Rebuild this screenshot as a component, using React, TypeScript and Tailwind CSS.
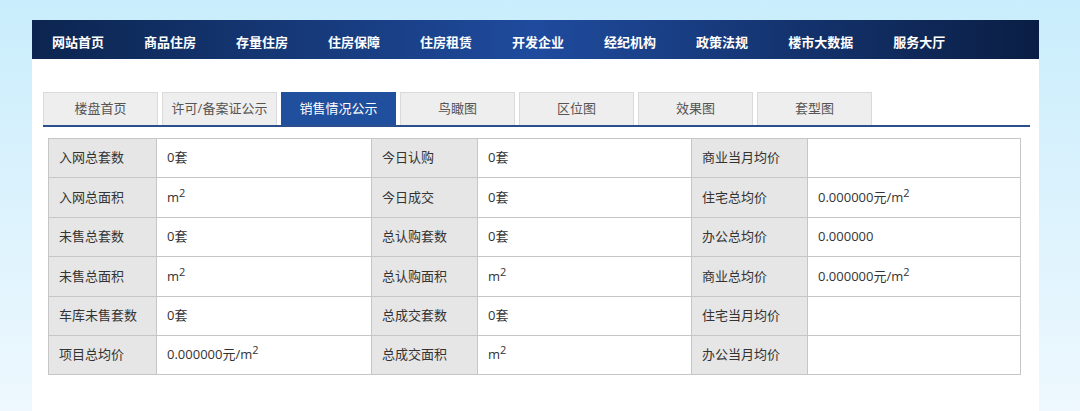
import React from "react";

const navItems = [
  "网站首页",
  "商品住房",
  "存量住房",
  "住房保障",
  "住房租赁",
  "开发企业",
  "经纪机构",
  "政策法规",
  "楼市大数据",
  "服务大厅",
];

const tabs = ["楼盘首页", "许可/备案证公示", "销售情况公示", "鸟瞰图", "区位图", "效果图", "套型图"];

function M2() {
  return (
    <span>
      m<sup className="text-[11px] relative -top-[5px]">2</sup>
    </span>
  );
}

function Price({ unit = true }: { unit?: boolean }) {
  return (
    <span>
      0.000000
      {unit && (
        <>
          元/
          <M2 />
        </>
      )}
    </span>
  );
}

type Cell = React.ReactNode;

const rows: [string, Cell, string, Cell, string, Cell][] = [
  ["入网总套数", "0套", "今日认购", "0套", "商业当月均价", ""],
  ["入网总面积", <M2 />, "今日成交", "0套", "住宅总均价", <Price />],
  ["未售总套数", "0套", "总认购套数", "0套", "办公总均价", <Price unit={false} />],
  ["未售总面积", <M2 />, "总认购面积", <M2 />, "商业总均价", <Price />],
  ["车库未售套数", "0套", "总成交套数", "0套", "住宅当月均价", ""],
  ["项目总均价", <Price />, "总成交面积", <M2 />, "办公当月均价", ""],
];

export default function App() {
  return (
    <div
      className="w-[1080px] h-[411px] overflow-hidden bg-gradient-to-b from-[#c9edfc] to-[#eef8fe] pt-[20px] pl-[32px]"
      style={{ fontFamily: '"Open Sans", "Noto Sans CJK SC", sans-serif' }}
    >
      <div className="w-[1007px] h-[400px] bg-white">
        {/* top nav */}
        <div className="h-[39px] flex items-center gap-[40px] pl-[20px] pt-[5px] bg-gradient-to-r from-[#0c2550] via-[#1f4b9e] to-[#0a1e44]">
          {navItems.map((n) => (
            <span key={n} className="text-white text-[13px] font-bold leading-none whitespace-nowrap">
              {n}
            </span>
          ))}
        </div>

        {/* tabs */}
        <div className="mt-[33px] ml-[11px] w-[987px] border-b-2 border-[#2b4f8c] flex gap-[4px]">
          {tabs.map((t) => {
            const active = t === "销售情况公示";
            return (
              <div
                key={t}
                className={
                  active
                    ? "w-[115px] h-[33px] flex items-center justify-center bg-[#1f4f9d] text-white text-[13px]"
                    : "w-[115px] h-[33px] flex items-center justify-center bg-[#eeeeee] border border-b-0 border-[#dadada] text-[#555555] text-[13px]"
                }
              >
                {t}
              </div>
            );
          })}
        </div>

        {/* data table */}
        <table className="mt-[11px] ml-[16px] w-[972px] border-collapse table-fixed text-[13px] text-[#333333]">
          <colgroup>
            <col className="w-[108px]" />
            <col className="w-[215px]" />
            <col className="w-[106px]" />
            <col className="w-[214px]" />
            <col className="w-[116px]" />
            <col className="w-[213px]" />
          </colgroup>
          <tbody>
            {rows.map((r, i) => (
              <tr key={i} className="h-[39.4px]">
                {r.map((c, j) => (
                  <td
                    key={j}
                    className={
                      j % 2 === 0
                        ? "border border-[#c6c6c6] bg-[#e6e6e6] pl-[10px] whitespace-nowrap"
                        : "border border-[#c6c6c6] bg-white pl-[10px] whitespace-nowrap"
                    }
                  >
                    {c}
                  </td>
                ))}
              </tr>
            ))}
          </tbody>
        </table>
      </div>
    </div>
  );
}
